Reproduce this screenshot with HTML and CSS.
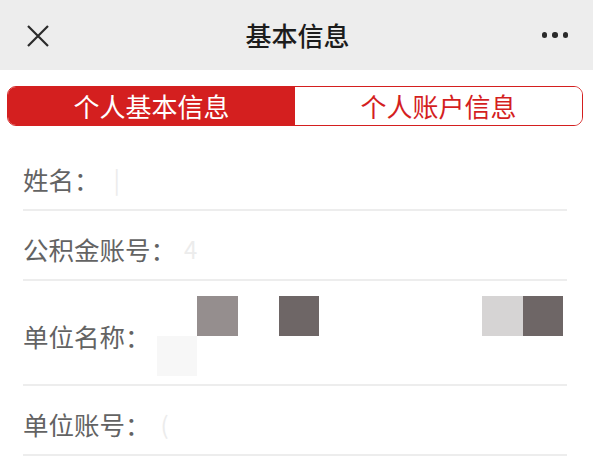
FILE: index.html
```html
<!DOCTYPE html>
<html lang="zh-CN">
<head>
<meta charset="utf-8">
<title>基本信息</title>
<link rel="stylesheet" href="styles.css">
</head>
<body>
<header class="topbar">
  <div class="bar-left">
    <svg class="icon-close" width="22" height="22" viewBox="0 0 22 22" aria-hidden="true">
      <path d="M1 1 L21 21 M21 1 L1 21" stroke="#2b2b2b" stroke-width="2.2" fill="none"/>
    </svg>
  </div>
  <h1 class="title">基本信息</h1>
  <div class="bar-right">
    <span class="dot"></span><span class="dot"></span><span class="dot"></span>
  </div>
</header>

<nav class="segment">
  <div class="seg-item active">个人基本信息</div>
  <div class="seg-item">个人账户信息</div>
</nav>

<div class="list">
  <div class="row">
    <span class="label">姓名：</span>
    <span class="value faint v1">|</span>
  </div>
  <div class="row">
    <span class="label">公积金账号：</span>
    <span class="value faint v2">4</span>
  </div>
  <div class="row row-tall">
    <span class="label">单位名称：</span>
    <div class="mosaic">
      <span class="cell"></span><span class="cell c-mid"></span><span class="cell"></span><span class="cell c-dark"></span><span class="cell"></span>
      <span class="cell"></span><span class="cell"></span><span class="cell"></span><span class="cell c-light"></span><span class="cell c-dark"></span>
      <span class="cell c-pale"></span>
    </div>
  </div>
  <div class="row">
    <span class="label">单位账号：</span>
    <span class="value faint v4">(</span>
  </div>
</div>
</body>
</html>
```

FILE: styles.css
```css
* { box-sizing: border-box; }

html, body {
  margin: 0;
  padding: 0;
  background: #ffffff;
}

body {
  width: 593px;
  height: 456px;
  overflow: hidden;
  font-family: "Noto Sans CJK SC", "Noto Sans", sans-serif;
}

.topbar {
  height: 70px;
  background: #ededed;
  display: grid;
  grid-template-columns: 1fr auto 1fr;
  align-items: center;
}

.bar-left {
  padding-left: 27px;
  display: flex;
  align-items: center;
}

.icon-close { display: block; margin-top: 1px; }

.title {
  margin: 0;
  font-size: 26px;
  font-weight: 500;
  color: #1c1c1c;
  line-height: 1;
  padding-left: 2px;
}

.bar-right {
  display: flex;
  justify-content: flex-end;
  align-items: center;
  gap: 5px;
  padding-right: 25px;
}

.dot {
  width: 5.5px;
  height: 5.5px;
  border-radius: 50%;
  background: #2b2b2b;
}

.segment {
  margin: 16px 10px 0 7px;
  height: 40px;
  display: flex;
  border: 1.5px solid #d41f1f;
  border-radius: 9px;
  overflow: hidden;
}

.seg-item {
  flex: 1;
  display: flex;
  align-items: center;
  justify-content: center;
  font-size: 26px;
  color: #d41f1f;
  background: #ffffff;
  line-height: 1;
}

.seg-item.active {
  background: #d41f1f;
  color: #ffffff;
}

.list {
  margin: 0 26px 0 23px;
  padding-top: 15px;
}

.row {
  display: flex;
  align-items: center;
  padding: 21px 0 13px;
  border-bottom: 2px solid #ededed;
}

.row-tall {
  padding: 15px 0 8px;
}

.label {
  font-size: 25.5px;
  line-height: 34px;
  color: #636363;
  white-space: nowrap;
}

.value {
  font-size: 24px;
  line-height: 34px;
}

.faint { color: #ececec; }
.v1 { margin-left: 14px; }
.v2 { margin-left: 8px; }
.v4 { margin-left: 10px; }

.mosaic {
  margin-left: 6px;
  display: grid;
  grid-template-columns: repeat(10, 40.7px);
  grid-auto-rows: 40px;
}

.cell { display: block; }
.c-mid { background: #958e8e; }
.c-dark { background: #6e6666; }
.c-light { background: #d6d4d4; }
.c-pale { background: #f7f7f7; }
```
